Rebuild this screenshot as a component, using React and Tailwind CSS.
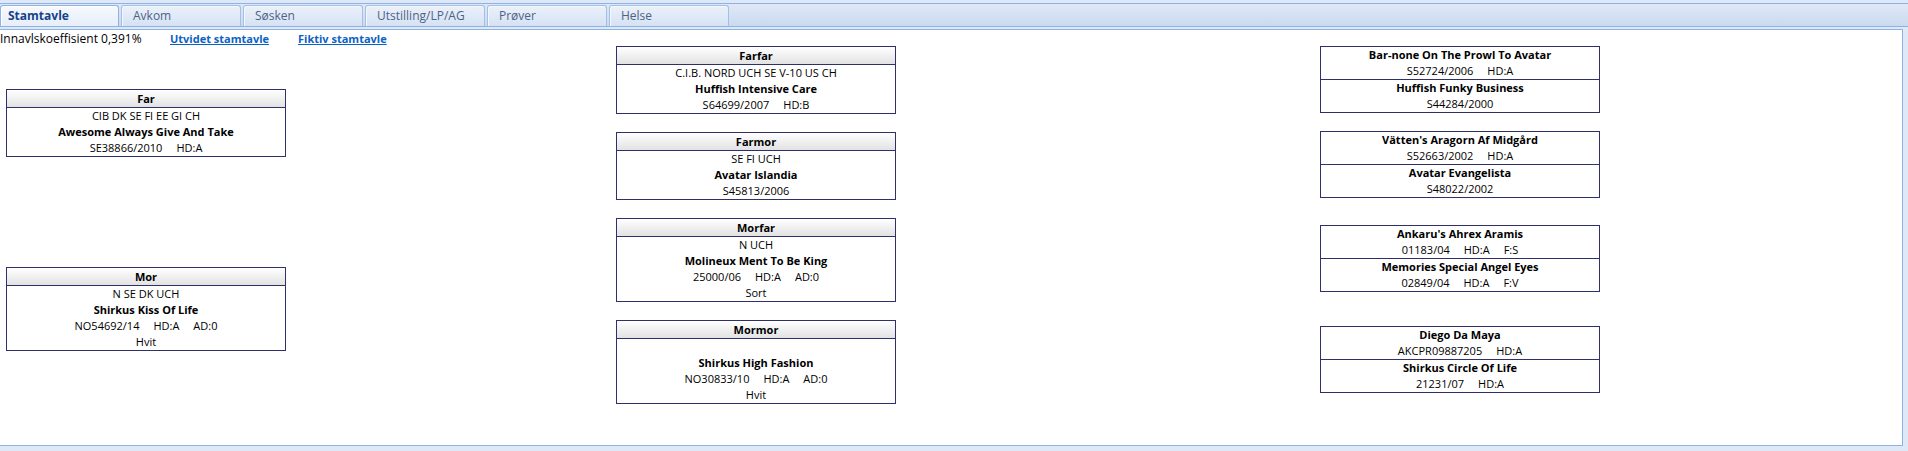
const font = { fontFamily: '"Open Sans", "Noto Sans", sans-serif' };

const tabs = ["Stamtavle", "Avkom", "Søsken", "Utstilling/LP/AG", "Prøver", "Helse"];

const Line = ({ parts, bold }) => (
  <div className={`flex justify-center gap-[14px] h-4 leading-4 whitespace-nowrap ${bold ? "font-bold" : ""}`}>
    {parts.map((p, i) => (
      <span key={i}>{p}</span>
    ))}
  </div>
);

const Box = ({ title, lines, className = "" }) => (
  <div className={`w-[280px] border border-[#2f2f6a] bg-white ${className}`}>
    <div className="h-[18px] leading-[17px] border-b border-[#2f2f6a] bg-gradient-to-b from-white to-[#e2e2e2] text-center font-bold">
      {title}
    </div>
    {lines.map((l, i) => (
      <Line key={i} parts={l.parts} bold={l.bold} />
    ))}
  </div>
);

const PairBox = ({ top, bottom, className = "" }) => (
  <div className={`w-[280px] border border-[#2f2f6a] bg-white ${className}`}>
    <div>
      <Line parts={[top.name]} bold />
      <Line parts={top.reg} />
    </div>
    <div className="border-t border-[#2f2f6a]">
      <Line parts={[bottom.name]} bold />
      <Line parts={bottom.reg} />
    </div>
  </div>
);

export default function App() {
  return (
    <div className="h-[451px] w-full bg-[#dfe8f6] text-[11px] text-black overflow-hidden" style={font}>
      <div className="h-[3px]" />
      {/* tab strip */}
      <div className="h-[24px] border-y border-[#8db2e3] bg-gradient-to-b from-[#dfe8f6] to-[#cbdaef] flex items-end gap-[2px]">
        {tabs.map((t, i) =>
          i === 0 ? (
            <div
              key={t}
              className="w-[119px] h-[21px] rounded-t-[3px] border border-b-0 border-[#8db2e3] bg-gradient-to-b from-[#f6f9fe] to-[#e6eef9] pl-[7px] leading-[20px] text-[12px] font-bold text-[#15428b] shadow-[inset_1px_1px_0_#ffffff]"
            >
              {t}
            </div>
          ) : (
            <div
              key={t}
              className="w-[120px] h-[21px] rounded-t-[3px] border border-b-0 border-[#a3bfe6] bg-gradient-to-b from-[#ebf1fb] to-[#d5e2f4] pl-[11px] leading-[20px] text-[12px] text-[#4d6385] shadow-[inset_1px_1px_0_#f4f8fd]"
            >
              {t}
            </div>
          )
        )}
      </div>
      <div className="h-[2px]" />
      {/* panel */}
      <div className="h-[417px] mr-[5px] border-y border-r border-[#8db2e3] bg-white">
        <div className="pt-[1px] h-[16px] leading-[15px] flex items-baseline whitespace-nowrap text-[12px]">
          <span className="w-[170px]">Innavlskoeffisient 0,391%</span>
          <a href="#" className="w-[128px] text-[11px] font-bold text-[#0b62c4] underline">Utvidet stamtavle</a>
          <a href="#" className="text-[11px] font-bold text-[#0b62c4] underline">Fiktiv stamtavle</a>
        </div>
        <div className="flex items-start">
          <div className="ml-[6px] flex flex-col">
            <Box
              className="mt-[43px]"
              title="Far"
              lines={[
                { parts: ["CIB DK SE FI EE GI CH"] },
                { parts: ["Awesome Always Give And Take"], bold: true },
                { parts: ["SE38866/2010", "HD:A"] },
              ]}
            />
            <Box
              className="mt-[110px]"
              title="Mor"
              lines={[
                { parts: ["N SE DK UCH"] },
                { parts: ["Shirkus Kiss Of Life"], bold: true },
                { parts: ["NO54692/14", "HD:A", "AD:0"] },
                { parts: ["Hvit"] },
              ]}
            />
          </div>
          <div className="ml-[330px] flex flex-col">
            <Box
              title="Farfar"
              lines={[
                { parts: ["C.I.B. NORD UCH SE V-10 US CH"] },
                { parts: ["Huffish Intensive Care"], bold: true },
                { parts: ["S64699/2007", "HD:B"] },
              ]}
            />
            <Box
              className="mt-[18px]"
              title="Farmor"
              lines={[
                { parts: ["SE FI UCH"] },
                { parts: ["Avatar Islandia"], bold: true },
                { parts: ["S45813/2006"] },
              ]}
            />
            <Box
              className="mt-[18px]"
              title="Morfar"
              lines={[
                { parts: ["N UCH"] },
                { parts: ["Molineux Ment To Be King"], bold: true },
                { parts: ["25000/06", "HD:A", "AD:0"] },
                { parts: ["Sort"] },
              ]}
            />
            <Box
              className="mt-[18px]"
              title="Mormor"
              lines={[
                { parts: [""] },
                { parts: ["Shirkus High Fashion"], bold: true },
                { parts: ["NO30833/10", "HD:A", "AD:0"] },
                { parts: ["Hvit"] },
              ]}
            />
          </div>
          <div className="ml-[424px] flex flex-col">
            <PairBox
              top={{ name: "Bar-none On The Prowl To Avatar", reg: ["S52724/2006", "HD:A"] }}
              bottom={{ name: "Huffish Funky Business", reg: ["S44284/2000"] }}
            />
            <PairBox
              className="mt-[18px]"
              top={{ name: "Vätten's Aragorn Af Midgård", reg: ["S52663/2002", "HD:A"] }}
              bottom={{ name: "Avatar Evangelista", reg: ["S48022/2002"] }}
            />
            <PairBox
              className="mt-[27px]"
              top={{ name: "Ankaru's Ahrex Aramis", reg: ["01183/04", "HD:A", "F:S"] }}
              bottom={{ name: "Memories Special Angel Eyes", reg: ["02849/04", "HD:A", "F:V"] }}
            />
            <PairBox
              className="mt-[34px]"
              top={{ name: "Diego Da Maya", reg: ["AKCPR09887205", "HD:A"] }}
              bottom={{ name: "Shirkus Circle Of Life", reg: ["21231/07", "HD:A"] }}
            />
          </div>
        </div>
      </div>
    </div>
  );
}
